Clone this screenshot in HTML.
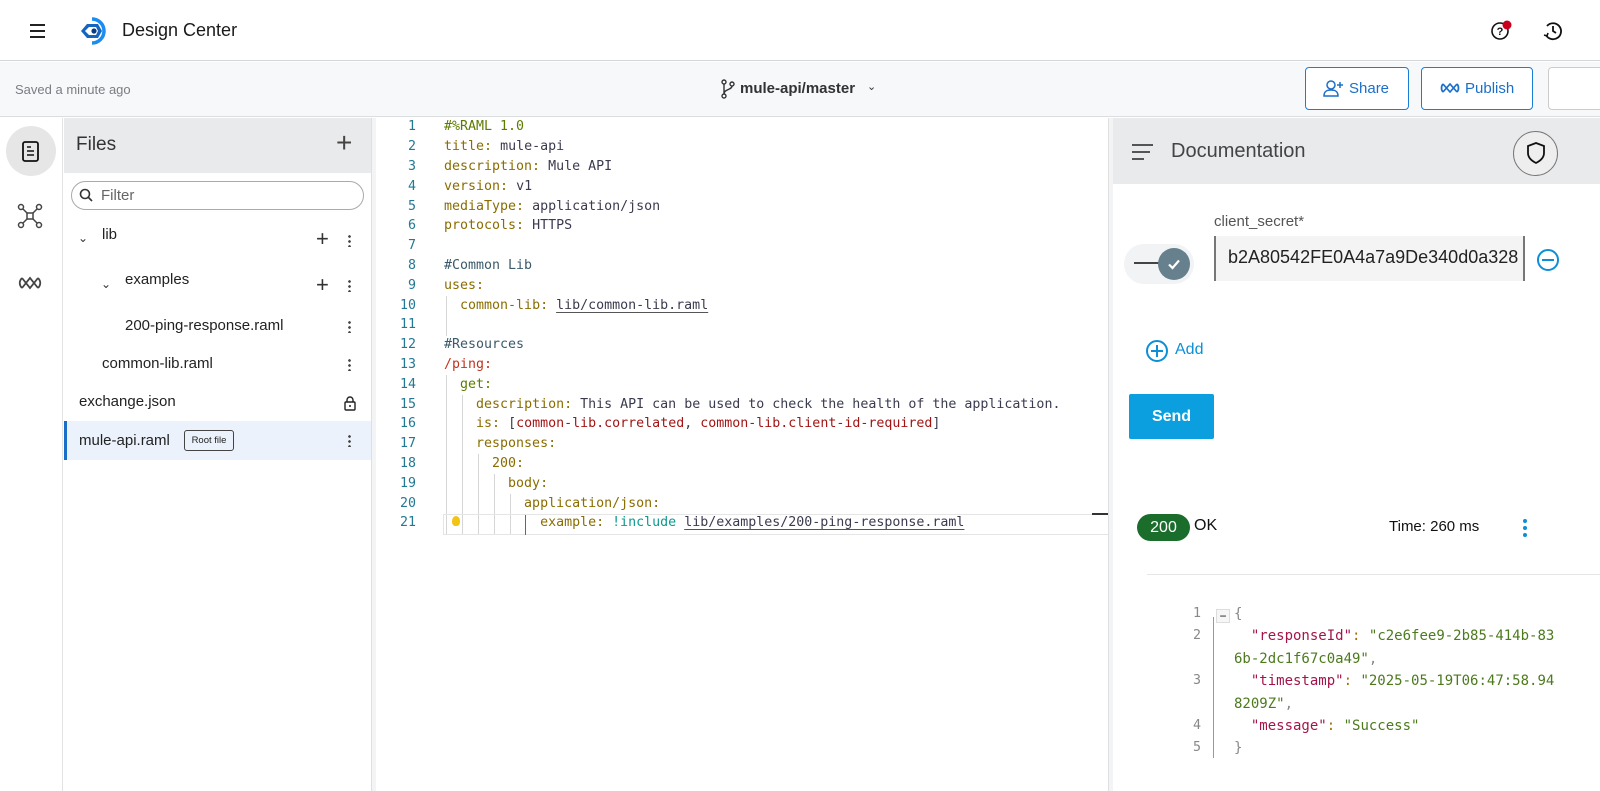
<!DOCTYPE html>
<html><head><meta charset="utf-8"><style>
*{box-sizing:border-box;margin:0;padding:0}
body{width:1600px;height:791px;overflow:hidden;background:#fff;font-family:"Liberation Sans",sans-serif;color:#222;position:relative}
.a{position:absolute}
.mono{font-family:"DejaVu Sans Mono","Liberation Mono",monospace}
.code div{position:absolute;left:0;height:20px;line-height:20px;white-space:pre;font-size:13.3px}
.ln{color:#237893}
.k{color:#8a6d00}.v{color:#3b3b4f}.c{color:#3b5a6a}.r{color:#c0341d}.g{color:#5d7b00}.s{color:#a31515}.t{color:#0c9a8f}
.u{text-decoration:underline;text-decoration-color:#555;text-underline-offset:3px}
.dots{position:absolute;width:3px;height:13px;background:radial-gradient(circle,#444 1.2px,transparent 1.5px) 0 0/3px 5px repeat-y}
.fi{position:absolute;font-size:15px;color:#222}
.guide{position:absolute;width:1px;background:#d6d6d6}
</style></head><body>
<!-- header -->
<div class="a" style="left:0;top:0;width:1600px;height:61px;background:#fff;border-bottom:1px solid #d4d6d8"></div>
<div class="a" style="left:30px;top:24px;width:15px;height:2px;background:#222;box-shadow:0 6px 0 #222,0 12px 0 #222"></div>
<svg class="a" style="left:78px;top:16px" width="32" height="30" viewBox="0 0 32 30"><path d="M14 3 A12 12 0 1 1 14 27" fill="none" stroke="#1c8cf0" stroke-width="3.5"/><path d="M3 15 L9 8 H20 L24 15 L20 22 H9 Z" fill="#1565c0"/><path d="M7 15 L11 11 H18 L20 15 L18 19 H11Z" fill="#fff"/><circle cx="16" cy="15" r="2.6" fill="#0b3a80"/></svg>
<div class="a" style="left:122px;top:20px;font-size:18px;color:#1a1a1a">Design Center</div>
<svg class="a" style="left:1490px;top:20px" width="22" height="22" viewBox="0 0 22 22"><circle cx="10" cy="11" r="8" fill="none" stroke="#111" stroke-width="1.6"/><text x="10" y="15" font-size="11" text-anchor="middle" font-family="Liberation Sans" font-weight="bold" fill="#111">?</text><circle cx="17" cy="5" r="4.5" fill="#c8001e"/></svg>
<svg class="a" style="left:1542px;top:20px" width="22" height="22" viewBox="0 0 22 22"><path d="M5 6 A8 8 0 1 1 4 15" fill="none" stroke="#111" stroke-width="1.8"/><path d="M11 6 V11 L14 13" fill="none" stroke="#111" stroke-width="1.8"/><path d="M2 15 L5 16 L6 13" fill="none" stroke="#111" stroke-width="1.6"/></svg>
<!-- toolbar -->
<div class="a" style="left:0;top:62px;width:1600px;height:55px;background:#f7f8fa;border-bottom:1px solid #dcdde0"></div>
<div class="a" style="left:15px;top:82px;font-size:13px;color:#7a7d82">Saved a minute ago</div>
<svg class="a" style="left:720px;top:79px" width="16" height="20" viewBox="0 0 16 20"><circle cx="4" cy="3" r="2" fill="none" stroke="#333" stroke-width="1.4"/><circle cx="4" cy="17" r="2" fill="none" stroke="#333" stroke-width="1.4"/><circle cx="12" cy="5" r="2" fill="none" stroke="#333" stroke-width="1.4"/><path d="M4 5V15M12 7C12 11 4 10 4 15" fill="none" stroke="#333" stroke-width="1.4"/></svg>
<div class="a" style="left:740px;top:80px;font-size:15px;font-weight:bold;color:#333">mule-api/master</div>
<div class="a" style="left:867px;top:80px;font-size:11px;color:#333">⌄</div>
<div class="a" style="left:1305px;top:67px;width:104px;height:43px;border:1px solid #1b7ed6;border-radius:4px;background:#fff"></div>
<svg class="a" style="left:1323px;top:79px" width="22" height="18" viewBox="0 0 22 18"><circle cx="8" cy="6" r="4" fill="none" stroke="#1b6fc9" stroke-width="1.5"/><path d="M1 17C1 12 4 11 8 11S15 12 15 17Z" fill="none" stroke="#1b6fc9" stroke-width="1.5"/><path d="M17 3V9M14 6H20" stroke="#1b6fc9" stroke-width="1.5"/></svg>
<div class="a" style="left:1349px;top:80px;font-size:15px;color:#1b6fc9">Share</div>
<div class="a" style="left:1421px;top:67px;width:112px;height:43px;border:1px solid #1b7ed6;border-radius:4px;background:#fff"></div>
<svg class="a" style="left:1440px;top:81px" width="20" height="14" viewBox="0 0 20 14"><path d="M3 3 L10 11 L17 3 M3 3 C1 5 1 9 3 11 M17 3 C19 5 19 9 17 11 M3 11 L10 3 L17 11" fill="none" stroke="#1b6fc9" stroke-width="1.7"/></svg>
<div class="a" style="left:1465px;top:80px;font-size:15px;color:#1b6fc9">Publish</div>
<div class="a" style="left:1548px;top:67px;width:60px;height:43px;border:1px solid #ccc;border-radius:4px;background:#fff"></div>
<!-- left rail -->
<div class="a" style="left:0;top:118px;width:63px;height:673px;background:#fff;border-right:1px solid #e3e3e3"></div>
<div class="a" style="left:6px;top:126px;width:50px;height:50px;border-radius:50%;background:#e6e6e6"></div>
<svg class="a" style="left:21px;top:141px" width="20" height="22" viewBox="0 0 20 22"><rect x="2" y="1" width="15" height="19" rx="2" fill="none" stroke="#111" stroke-width="1.8"/><path d="M6 6H10M6 10H13M6 14H13" stroke="#111" stroke-width="1.6"/></svg>
<svg class="a" style="left:17px;top:203px" width="26" height="26" viewBox="0 0 26 26"><g fill="none" stroke="#444" stroke-width="1.5"><circle cx="4" cy="4" r="2.5"/><circle cx="22" cy="4" r="2.5"/><circle cx="4" cy="22" r="2.5"/><circle cx="22" cy="22" r="2.5"/><rect x="10" y="10" width="6" height="6"/><path d="M6 6L10 10M20 6L16 10M6 20L10 16M20 20L16 16"/></g></svg>
<svg class="a" style="left:18px;top:275px" width="24" height="16" viewBox="0 0 24 16"><path d="M4 3 L12 13 L20 3 M4 3 C1 6 1 10 4 13 M20 3 C23 6 23 10 20 13 M4 13 L12 3 L20 13" fill="none" stroke="#444" stroke-width="1.8"/></svg>
<!-- files panel -->
<div class="a" style="left:64px;top:118px;width:307px;height:55px;background:#e9eaec"></div>
<div class="a" style="left:76px;top:134px;font-size:19px;color:#333">Files</div>
<div class="a" style="left:336px;top:127px;font-size:28px;font-weight:300;color:#444">+</div>
<div class="a" style="left:64px;top:173px;width:307px;height:618px;background:#fff"></div>
<div class="a" style="left:71px;top:181px;width:293px;height:29px;border:1px solid #aaa;border-radius:15px"></div>
<svg class="a" style="left:79px;top:188px" width="14" height="14" viewBox="0 0 14 14"><circle cx="6" cy="6" r="4.5" fill="none" stroke="#333" stroke-width="1.6"/><path d="M9.5 9.5L13 13" stroke="#333" stroke-width="1.6"/></svg>
<div class="a" style="left:101px;top:187px;font-size:15px;color:#666">Filter</div>
<div class="fi" style="left:78px;top:231px;font-size:12px;color:#333">⌄</div>
<div class="fi" style="left:102px;top:226px">lib</div>
<div class="a" style="left:316px;top:226px;font-size:22px;font-weight:300;color:#333">+</div>
<div class="dots" style="left:348px;top:234px"></div>
<div class="fi" style="left:101px;top:277px;font-size:12px;color:#333">⌄</div>
<div class="fi" style="left:125px;top:271px">examples</div>
<div class="a" style="left:316px;top:272px;font-size:22px;font-weight:300;color:#333">+</div>
<div class="dots" style="left:348px;top:279px"></div>
<div class="fi" style="left:125px;top:317px">200-ping-response.raml</div>
<div class="dots" style="left:348px;top:320px"></div>
<div class="fi" style="left:102px;top:355px">common-lib.raml</div>
<div class="dots" style="left:348px;top:358px"></div>
<div class="fi" style="left:79px;top:393px">exchange.json</div>
<svg class="a" style="left:343px;top:395px" width="14" height="16" viewBox="0 0 14 16"><rect x="2" y="7" width="10" height="8" rx="1" fill="none" stroke="#222" stroke-width="1.4"/><path d="M4 7V5A3 3 0 0 1 10 5V7" fill="none" stroke="#222" stroke-width="1.4"/><circle cx="7" cy="11" r="1" fill="#222"/></svg>
<div class="a" style="left:64px;top:421px;width:307px;height:39px;background:#ebf2fc;border-left:3px solid #1b6fc9"></div>
<div class="fi" style="left:79px;top:432px">mule-api.raml</div>
<div class="a" style="left:184px;top:430px;width:50px;height:21px;border:1px solid #444;border-radius:3px;font-size:9.5px;line-height:19px;text-align:center;color:#222">Root file</div>
<div class="dots" style="left:348px;top:434px"></div>
<!-- divider -->
<div class="a" style="left:371px;top:118px;width:5px;height:673px;background:#f3f4f6;border-left:1px solid #e0e0e0"></div>
<!-- editor -->
<div class="a" style="left:376px;top:118px;width:732px;height:673px;background:#fff"></div>
<div class="a mono code" style="left:384px;top:117px;width:32px;text-align:right">
<div class="ln" style="top:0;width:32px;text-align:right">1</div><div class="ln" style="top:20px;width:32px;text-align:right">2</div><div class="ln" style="top:40px;width:32px;text-align:right">3</div><div class="ln" style="top:60px;width:32px;text-align:right">4</div><div class="ln" style="top:80px;width:32px;text-align:right">5</div><div class="ln" style="top:99px;width:32px;text-align:right">6</div><div class="ln" style="top:119px;width:32px;text-align:right">7</div><div class="ln" style="top:139px;width:32px;text-align:right">8</div><div class="ln" style="top:159px;width:32px;text-align:right">9</div><div class="ln" style="top:179px;width:32px;text-align:right">10</div><div class="ln" style="top:198px;width:32px;text-align:right">11</div><div class="ln" style="top:218px;width:32px;text-align:right">12</div><div class="ln" style="top:238px;width:32px;text-align:right">13</div><div class="ln" style="top:258px;width:32px;text-align:right">14</div><div class="ln" style="top:278px;width:32px;text-align:right">15</div><div class="ln" style="top:297px;width:32px;text-align:right">16</div><div class="ln" style="top:317px;width:32px;text-align:right">17</div><div class="ln" style="top:337px;width:32px;text-align:right">18</div><div class="ln" style="top:357px;width:32px;text-align:right">19</div><div class="ln" style="top:377px;width:32px;text-align:right">20</div><div class="ln" style="top:396px;width:32px;text-align:right">21</div>
</div>
<div class="guide" style="left:446px;top:296px;height:40px"></div>
<div class="guide" style="left:446px;top:375px;height:160px"></div>
<div class="guide" style="left:462px;top:395px;height:140px"></div>
<div class="guide" style="left:478px;top:454px;height:81px"></div>
<div class="guide" style="left:494px;top:474px;height:61px"></div>
<div class="guide" style="left:510px;top:494px;height:41px"></div>
<div class="a" style="left:443px;top:514px;width:665px;height:21px;border:1px solid #e5e5e5;border-right:none"></div>
<div class="a" style="left:525px;top:515px;width:1px;height:20px;background:#666"></div>
<div class="a" style="left:1092px;top:513px;width:16px;height:2px;background:#333"></div>
<div class="a" style="left:452px;top:516px;width:8px;height:10px;border-radius:50% 50% 40% 40%;background:#f3c316"></div>
<div class="a mono code" style="left:444px;top:117px">
<div style="top:0" class="g">#%RAML 1.0</div>
<div style="top:20px"><span class="k">title:</span> <span class="v">mule-api</span></div>
<div style="top:40px"><span class="k">description:</span> <span class="v">Mule API</span></div>
<div style="top:60px"><span class="k">version:</span> <span class="v">v1</span></div>
<div style="top:80px"><span class="k">mediaType:</span> <span class="v">application/json</span></div>
<div style="top:99px"><span class="k">protocols:</span> <span class="v">HTTPS</span></div>
<div style="top:139px" class="c">#Common Lib</div>
<div style="top:159px" class="k">uses:</div>
<div style="top:179px">  <span class="k">common-lib:</span> <span class="v u">lib/common-lib.raml</span></div>
<div style="top:218px" class="c">#Resources</div>
<div style="top:238px" class="r">/ping:</div>
<div style="top:258px" class="g">  get:</div>
<div style="top:278px">    <span class="k">description:</span> <span class="v">This API can be used to check the health of the application.</span></div>
<div style="top:297px">    <span class="k">is:</span> <span class="v">[</span><span class="s">common-lib.correlated</span><span class="v">, </span><span class="s">common-lib.client-id-required</span><span class="v">]</span></div>
<div style="top:317px" class="k">    responses:</div>
<div style="top:337px" class="k">      200:</div>
<div style="top:357px" class="k">        body:</div>
<div style="top:377px" class="k">          application/json:</div>
<div style="top:396px">            <span class="k">example:</span> <span class="t">!include</span> <span class="v u">lib/examples/200-ping-response.raml</span></div>
</div>
<!-- right divider -->
<div class="a" style="left:1108px;top:118px;width:5px;height:673px;background:#f3f4f6;border-left:1px solid #e0e0e0"></div>
<!-- right panel -->
<div class="a" style="left:1113px;top:118px;width:487px;height:66px;background:#e9eaec"></div>
<div class="a" style="left:1132px;top:144px;width:21px;height:2px;background:#555"></div>
<div class="a" style="left:1132px;top:151px;width:18px;height:2px;background:#555"></div>
<div class="a" style="left:1132px;top:158px;width:12px;height:2px;background:#555"></div>
<div class="a" style="left:1171px;top:140px;font-size:20px;color:#444">Documentation</div>
<div class="a" style="left:1513px;top:131px;width:45px;height:45px;border-radius:50%;border:1px solid #777;background:#eee"></div>
<svg class="a" style="left:1525px;top:141px" width="22" height="24" viewBox="0 0 22 24"><path d="M11 2L3 5V12C3 17 7 20 11 22C15 20 19 17 19 12V5Z" fill="none" stroke="#111" stroke-width="1.8"/></svg>
<div class="a" style="left:1214px;top:213px;font-size:15px;color:#555">client_secret*</div>
<div class="a" style="left:1124px;top:244px;width:70px;height:40px;border-radius:20px;background:#f2f3f4"></div>
<div class="a" style="left:1134px;top:262px;width:30px;height:2px;background:#444"></div>
<div class="a" style="left:1158px;top:248px;width:32px;height:32px;border-radius:50%;background:#66808e"></div>
<svg class="a" style="left:1166px;top:256px" width="16" height="16" viewBox="0 0 16 16"><path d="M3 8.5L6.5 12L13 4.5" fill="none" stroke="#fff" stroke-width="2.2"/></svg>
<div class="a" style="left:1214px;top:236px;width:311px;height:45px;background:#f4f4f4;border-left:2px solid #777;border-right:2px solid #777"></div>
<div class="a" style="left:1228px;top:247px;font-size:18px;color:#222">b2A80542FE0A4a7a9De340d0a328</div>
<svg class="a" style="left:1536px;top:248px" width="24" height="24" viewBox="0 0 24 24"><circle cx="12" cy="12" r="10" fill="none" stroke="#0d8fd8" stroke-width="2"/><path d="M6 12H18" stroke="#0d8fd8" stroke-width="2"/></svg>
<svg class="a" style="left:1145px;top:339px" width="24" height="24" viewBox="0 0 24 24"><circle cx="12" cy="12" r="10" fill="none" stroke="#0d8fd8" stroke-width="2"/><path d="M6 12H18M12 6V18" stroke="#0d8fd8" stroke-width="2"/></svg>
<div class="a" style="left:1175px;top:341px;font-size:16px;color:#0d8fd8">Add</div>
<div class="a" style="left:1129px;top:394px;width:85px;height:45px;background:#0b9fdf;border-radius:2px;color:#fff;font-size:16px;font-weight:bold;text-align:center;line-height:45px">Send</div>
<div class="a" style="left:1137px;top:514px;width:53px;height:27px;border-radius:14px;background:#1b6d2b;color:#fff;font-size:16px;text-align:center;line-height:27px">200</div>
<div class="a" style="left:1194px;top:517px;font-size:16px;color:#111">OK</div>
<div class="a" style="left:1389px;top:518px;font-size:15px;color:#111">Time: 260 ms</div>
<div class="a" style="left:1523px;top:519px;width:4px;height:4px;border-radius:50%;background:#0d8fd8;box-shadow:0 7px 0 #0d8fd8,0 14px 0 #0d8fd8"></div>
<div class="a" style="left:1147px;top:574px;width:453px;height:1px;background:#e6e6e6"></div>
<div class="a" style="left:1213px;top:617px;width:1px;height:141px;background:#999"></div>
<div class="a" style="left:1216px;top:609px;width:14px;height:14px;border:1px solid #ddd;background:#f6f6f6;font-size:12px;line-height:12px;text-align:center;color:#111">−</div>
<div class="a mono code" style="left:1193px;top:604px;font-size:14px">
<div style="top:0;color:#888">1</div><div style="top:22px;color:#888">2</div><div style="top:67px;color:#888">3</div><div style="top:112px;color:#888">4</div><div style="top:134px;color:#888">5</div>
</div>
<div class="a mono code" style="left:1234px;top:604px">
<div style="top:0;color:#888;font-size:14px">{</div>
<div style="top:22px;font-size:14px">  <span style="color:#a3154a">"responseId"</span><span style="color:#a07000">:</span> <span style="color:#4c7a1d">"c2e6fee9-2b85-414b-83</span></div>
<div style="top:45px;left:0;font-size:14px;color:#4c7a1d">6b-2dc1f67c0a49"<span style="color:#888">,</span></div>
<div style="top:67px;font-size:14px">  <span style="color:#a3154a">"timestamp"</span><span style="color:#a07000">:</span> <span style="color:#4c7a1d">"2025-05-19T06:47:58.94</span></div>
<div style="top:90px;font-size:14px;color:#4c7a1d">8209Z"<span style="color:#888">,</span></div>
<div style="top:112px;font-size:14px">  <span style="color:#a3154a">"message"</span><span style="color:#a07000">:</span> <span style="color:#4c7a1d">"Success"</span></div>
<div style="top:134px;color:#888;font-size:14px">}</div>
</div>
</body></html>
